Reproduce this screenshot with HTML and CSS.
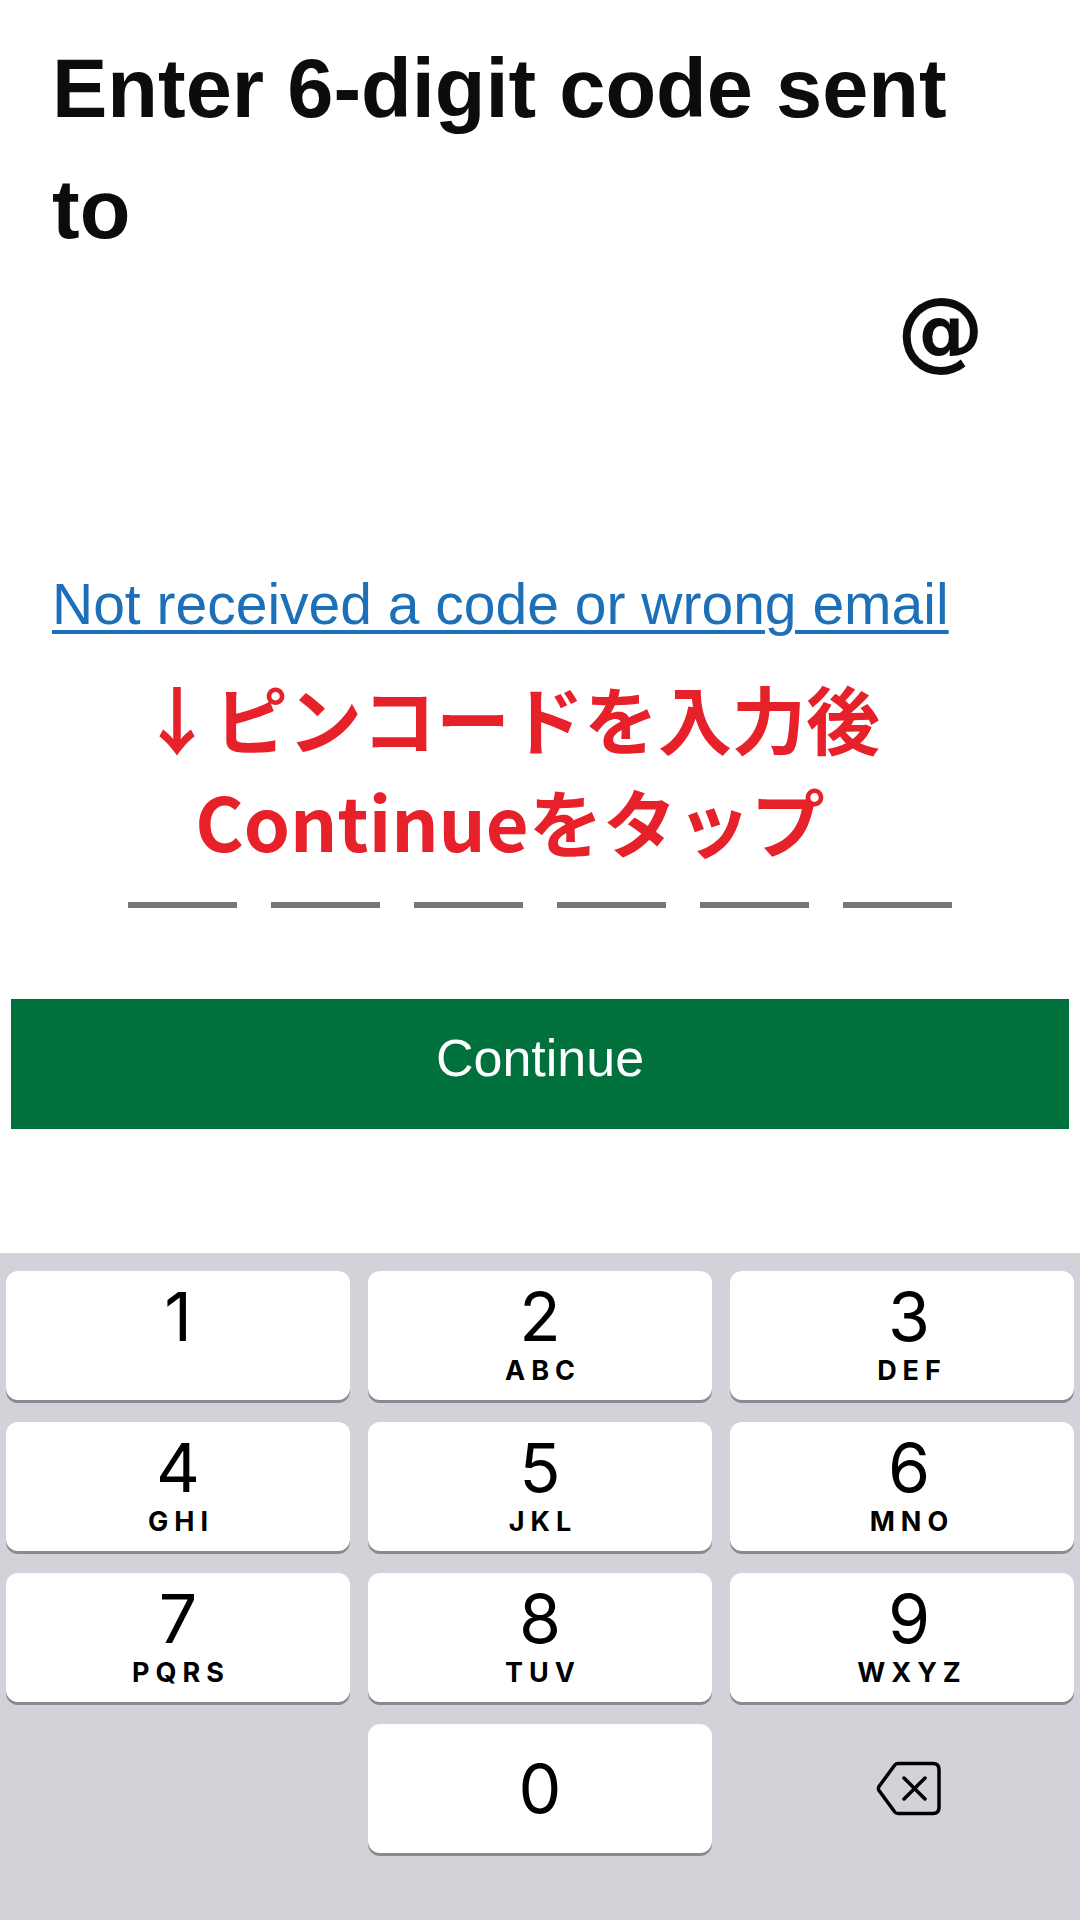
FILE: index.html
```html
<!DOCTYPE html>
<html lang="en">
<head>
  <meta charset="UTF-8" />
  <meta name="viewport" content="width=device-width, initial-scale=1.0"/>
  <title>Enter 6-digit code</title>
  <link rel="stylesheet" href="styles.css">
</head>
<body>
  <div class="content">
    <h1 class="title">Enter 6-digit code sent to <span class="email"><span class="masked"></span><span class="at">@</span></span></h1>

    <p class="resend"><a href="#">Not received a code or wrong email</a></p>

    <p class="note">↓ピンコードを入力後<br>Continueをタップ</p>

    <div class="code-slots">
      <span class="slot"></span>
      <span class="slot"></span>
      <span class="slot"></span>
      <span class="slot"></span>
      <span class="slot"></span>
      <span class="slot"></span>
    </div>
  </div>

  <button class="continue">Continue</button>

  <div class="keypad">
    <div class="key"><span class="digit">1</span></div>
    <div class="key"><span class="digit">2</span><span class="letters">ABC</span></div>
    <div class="key"><span class="digit">3</span><span class="letters">DEF</span></div>
    <div class="key"><span class="digit">4</span><span class="letters">GHI</span></div>
    <div class="key"><span class="digit">5</span><span class="letters">JKL</span></div>
    <div class="key"><span class="digit">6</span><span class="letters">MNO</span></div>
    <div class="key"><span class="digit">7</span><span class="letters">PQRS</span></div>
    <div class="key"><span class="digit">8</span><span class="letters">TUV</span></div>
    <div class="key"><span class="digit">9</span><span class="letters">WXYZ</span></div>
    <div class="key key-blank"></div>
    <div class="key key-zero"><span class="digit">0</span></div>
    <div class="key key-delete">
      <svg width="66" height="55" viewBox="0 0 66 55" fill="none" stroke="#000" stroke-width="3.5" stroke-linecap="round" stroke-linejoin="round">
        <path d="M22 2.5 H57 Q63 2.5 63 8.5 V46.5 Q63 52.5 57 52.5 H22 Q20 52.5 18.8 51 L3 29.5 Q1.8 27.5 3 25.5 L18.8 4 Q20 2.5 22 2.5 Z"/>
        <path d="M28 17 L49 38 M49 17 L28 38"/>
      </svg>
    </div>
  </div>
</body>
</html>
```

FILE: styles.css
```css
body {
  margin: 0;
  background: #fff;
  color: #0b0c0c;
  font-family: "Liberation Sans", Arial, sans-serif;
}
.content {
  padding: 28px 52px 0;
}
.title {
  margin: 0;
  font-size: 83px;
  line-height: 121px;
  font-weight: 700;
}
.email {
  display: block;
}
.masked {
  display: inline-block;
  width: 845px;
  height: 1px;
}
.at {
  font-family: "DejaVu Sans", sans-serif;
  font-size: 87px;
}
.resend {
  margin: 175px 0 0;
  font-size: 57px;
  line-height: 74px;
}
.resend a {
  color: #1d70b8;
  text-decoration-thickness: 4px;
  text-underline-offset: 6px;
}
.note {
  margin: 24px 0 0;
  padding-right: 60px;
  text-align: center;
  color: #e6212a;
  font-family: "Noto Sans CJK JP", sans-serif;
  font-weight: 700;
  font-size: 74px;
  line-height: 103px;
}
.code-slots {
  display: flex;
  justify-content: center;
  gap: 34px;
  margin-top: 31px;
}
.slot {
  width: 109px;
  height: 6px;
  background: #767676;
}
.continue {
  display: flex;
  align-items: center;
  justify-content: center;
  box-sizing: border-box;
  width: calc(100% - 22px);
  height: 130px;
  margin: 91px 11px 0;
  padding: 0 0 12px;
  border: 0;
  background: #00703c;
  color: #fff;
  font-family: "Liberation Sans", Arial, sans-serif;
  font-size: 52px;
}
.keypad {
  display: grid;
  grid-template-columns: repeat(3, 1fr);
  grid-auto-rows: 129px;
  column-gap: 18px;
  row-gap: 22px;
  margin-top: 124px;
  padding: 18px 6px 68px;
  background: #d1d3d9;
}
.key {
  display: flex;
  flex-direction: column;
  align-items: center;
  box-sizing: border-box;
  padding-top: 11px;
  background: #fff;
  border-radius: 12px;
  box-shadow: 0 3px 0 #898a8d;
  font-family: Inter, "Liberation Sans", sans-serif;
  color: #000;
}
.key:nth-child(3n) {
  padding-left: 14px;
}
.digit {
  font-size: 68px;
  line-height: 68px;
  font-weight: 400;
}
.letters {
  margin-top: 7px;
  padding-left: 6px;
  font-size: 27px;
  line-height: 27px;
  font-weight: 700;
  letter-spacing: 6px;
}
.key-zero {
  padding-top: 30px;
}
.key-blank,
.key-delete {
  background: transparent;
  box-shadow: none;
}
.key-delete {
  justify-content: center;
  padding: 0 0 0 14px;
}
```
